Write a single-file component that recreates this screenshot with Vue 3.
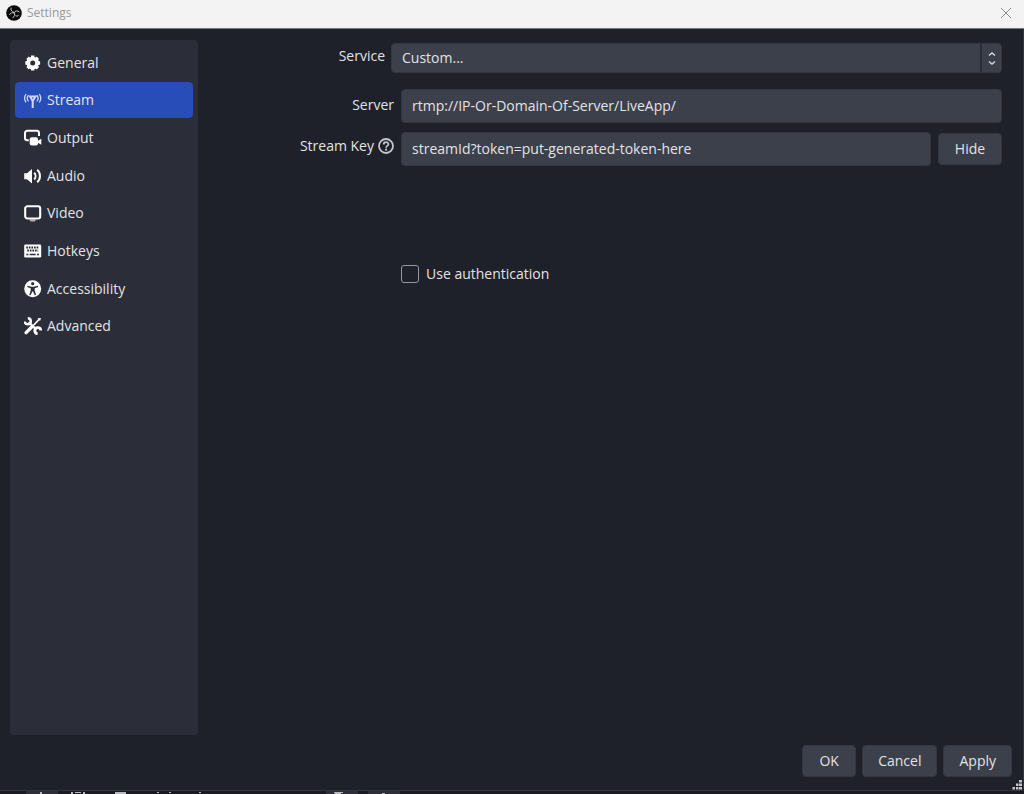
<script setup>
import { ref } from 'vue'

const sections = ['General', 'Stream', 'Output', 'Audio', 'Video', 'Hotkeys', 'Accessibility', 'Advanced']
const active = ref('Stream')
const service = ref('Custom...')
const server = ref('rtmp://IP-Or-Domain-Of-Server/LiveApp/')
const streamKey = ref('streamId?token=put-generated-token-here')
const keyShown = ref(true)
const useAuth = ref(false)
</script>

<template>
  <div class="window">
    <header class="titlebar">
      <svg class="logo" viewBox="0 0 16 16" aria-hidden="true">
        <circle cx="8" cy="8" r="7.8" fill="#0a0a0a" />
        <g fill="none" stroke="#d0d0d0" stroke-width="1" stroke-linecap="round">
          <path d="M5 3c-.4 2.300.9 4 3 4.400" />
          <path d="M8.200 7.300c1.200-1.700 3.200-2 4.900-.5" />
          <path d="M8.300 7.600c1.100 1.900.6 3.800-1.400 5" />
          <path d="M7.600 7.800c-1.500-.3-3.200.3-4 1.600" />
          <path d="M9.900 10.900c1 .4 1.900.2 2.500-.4" />
        </g>
      </svg>
      <h1 class="title">Settings</h1>
      <button class="close" type="button" aria-label="Close">
        <svg viewBox="0 0 12 12"><path d="M1 1l10 10M11 1L1 11" fill="none" stroke="#8c8c8c" /></svg>
      </button>
    </header>

    <div class="body">
      <nav class="sidebar">
        <ul class="sections">
          <li v-for="name in sections" :key="name">
            <button type="button" class="section" :class="{ active: name === active }" @click="active = name">
              <svg class="icon" viewBox="0 0 18 18" aria-hidden="true">
                <g v-if="name === 'General'">
                  <circle cx="8.700" cy="9" r="4.400" fill="none" stroke="currentColor" stroke-width="3.800" />
                  <path d="M8.700 1.600v2.500M8.700 13.900v2.500M1.300 9h2.500M13.600 9h2.500M3.500 3.800l1.800 1.800M12.100 12.400l1.800 1.800M3.500 14.200l1.800-1.800M12.100 5.600l1.800-1.800" stroke="currentColor" stroke-width="3.400" />
                </g>
                <g v-else-if="name === 'Stream'" fill="none" stroke="currentColor">
                  <path d="M1.800 3.500a7 7 0 0 0 0 7.500M4.200 4.600a4.500 4.500 0 0 0 0 5.300M15.600 3.500a7 7 0 0 1 0 7.500M13.200 4.600a4.500 4.500 0 0 1 0 5.300" stroke-width="1.300" stroke-linecap="round" />
                  <path d="M6 5.500h5.600L8.700 9.900z" stroke-width="1.900" />
                  <path d="M8.700 9v8" stroke-width="2" />
                </g>
                <g v-else-if="name === 'Output'">
                  <path d="M4.800 11.200H3.200A2.200 2.200 0 0 1 1 9V4a2.200 2.200 0 0 1 2.200-2.200h9.600A2.200 2.200 0 0 1 15 4v3" fill="none" stroke="currentColor" stroke-width="2" />
                  <rect x="5.700" y="8.200" width="8.300" height="8.200" rx="2" fill="currentColor" />
                  <path d="M13.500 12.100l3.800-2.300v6l-3.800-2.300z" fill="currentColor" />
                </g>
                <g v-else-if="name === 'Audio'">
                  <path d="M.2 6.200h2.800L8 1.900v14.600l-5-4.300H.2z" fill="currentColor" />
                  <path d="M10.200 5.600c1.800 1.900 1.800 5 0 6.900M13.200 2.800c3.700 3.200 3.700 9.300 0 12.500" fill="none" stroke="currentColor" stroke-width="2" />
                </g>
                <g v-else-if="name === 'Video'">
                  <rect x="1.200" y="2.300" width="15" height="12.200" rx="2.200" fill="none" stroke="currentColor" stroke-width="2.100" />
                  <path d="M5.200 15.500h7l-1.500 1.900h-4z" fill="currentColor" opacity=".65" />
                </g>
                <g v-else-if="name === 'Hotkeys'">
                  <rect x=".2" y="2.500" width="17" height="13" rx="1.300" fill="currentColor" />
                  <path d="M2.200 5.500h13M3.200 8.500h11" fill="none" stroke="#2b2d38" stroke-width="1.800" stroke-dasharray="1.700 .9" />
                  <path d="M2.400 12.500h2M5.700 12.500h6M13 12.500h2" fill="none" stroke="#2b2d38" stroke-width="1.500" />
                </g>
                <g v-else-if="name === 'Accessibility'">
                  <circle cx="8.700" cy="8.700" r="8.500" fill="currentColor" />
                  <circle cx="8.700" cy="3.700" r="1.600" fill="#2b2d38" />
                  <path d="M3.500 5.700l4 1.100h2.400l4-1.100.3 1.200-3.500 1.300v2.200l1.400 4.500-1.300.4-1.700-3.800h-.8l-1.700 3.800-1.300-.4 1.400-4.500V8.200L3.200 6.900z" fill="#2b2d38" />
                </g>
                <g v-else fill="none" stroke="currentColor">
                  <path d="M15.500 2L9.300 8.500" stroke-width="1.800" />
                  <path d="M17 .9l-.9 3-2.600-2.600z" fill="currentColor" stroke="none" />
                  <path d="M7.300 10.500L2.100 15.700" stroke-width="3.300" stroke-linecap="round" />
                  <path d="M4.700 5.200l7.700 7.400" stroke-width="2.200" />
                  <path d="M3.800 1.300a3 3 0 1 1-3 3.200" stroke-width="2.500" />
                  <path d="M13.600 16.700a3 3 0 1 1 3.200-3.200" stroke-width="2.800" />
                </g>
              </svg>
              <span>{{ name }}</span>
            </button>
          </li>
        </ul>
      </nav>

      <form class="form" @submit.prevent>
        <div class="row service-row">
          <label class="label" for="service">Service</label>
          <div class="combo">
            <select id="service" v-model="service" class="field">
              <option>Custom...</option>
            </select>
            <svg class="arrows" viewBox="0 0 20 28" aria-hidden="true">
              <path d="M7 11.500l3-2.500 3 2.500M7 17.500l3 2.500 3-2.500" fill="none" stroke="#d5d6d9" stroke-width="1.400" />
            </svg>
          </div>
        </div>
        <div class="row server-row">
          <label class="label" for="server">Server</label>
          <input id="server" v-model="server" class="field text" type="text" />
        </div>
        <div class="row key-row">
          <div class="label">
            <label for="key">Stream Key</label>
            <svg class="help" viewBox="0 0 16 16" aria-hidden="true">
              <circle cx="8" cy="8" r="7" fill="none" stroke="#c4c5c8" stroke-width="1.800" />
              <path d="M5.700 6.400C5.700 3.300 10.400 3.300 10.400 6.200 10.400 7.900 8.100 7.800 8.100 9.700" fill="none" stroke="#c4c5c8" stroke-width="1.700" />
              <circle cx="8.100" cy="11.700" r="1.100" fill="#c4c5c8" />
            </svg>
          </div>
          <input id="key" v-model="streamKey" class="field text" :type="keyShown ? 'text' : 'password'" />
          <button class="button hide" type="button" @click="keyShown = !keyShown">{{ keyShown ? 'Hide' : 'Show' }}</button>
        </div>
        <label class="auth">
          <input v-model="useAuth" type="checkbox" />
          <span>Use authentication</span>
        </label>
      </form>
    </div>

    <footer class="actions">
      <button class="button" type="button">OK</button>
      <button class="button" type="button">Cancel</button>
      <button class="button" type="button">Apply</button>
      <svg class="grip" viewBox="0 0 10 10" aria-hidden="true">
        <path d="M7 0h3v2.500H7zM4 3.500h2.500V6H4zM7 3.500h3V6H7zM.5 7H3v2.500H.5zM4 7h2.500v2.500H4zM7 7h3v2.500H7z" fill="#c6c6c8" />
      </svg>
    </footer>

    <div class="backdrop">
      <svg width="420" height="3" viewBox="0 0 420 3" aria-hidden="true">
        <path d="M26 0h32v3H26zM326 0h32v3h-32zM368 0h32v3h-32z" fill="#2d2e38" />
        <path d="M40 1h2v2h-2zM71 1h2v2h-2zM83 1h2v2h-2zM75 1h6v1h-6zM115 1h11v2h-11zM157 1h2v1h-2zM169 1h2v1h-2zM199 1h2v1h-2zM334 1h9v1h-9zM335 2h6v1h-6zM382 2h3v1h-3z" fill="#b9b9c0" />
      </svg>
    </div>
  </div>
</template>

<style>
body {
  margin: 0;
  background: #1f2129;
}
</style>

<style scoped>
.window {
  display: flex;
  flex-direction: column;
  min-height: 100vh;
  box-sizing: border-box;
  background: #1e2129;
  color: #e2e3e5;
  font: 14px/20px "Open Sans", "Noto Sans", sans-serif;
}
button, input, select {
  font: inherit;
  color: inherit;
}
.titlebar {
  display: flex;
  align-items: center;
  height: 29px;
  padding: 0 12px 3px 6px;
  box-sizing: border-box;
  background: #f3f3f3;
  border-bottom: 1px solid #77797d;
}
.logo {
  width: 16px;
  height: 16px;
}
.title {
  flex: 1;
  margin: 0 0 0 5px;
  font-size: 12px;
  font-weight: 400;
  line-height: 20px;
  color: #999;
}
.close {
  display: flex;
  padding: 0;
  border: 0;
  background: none;
}
.close svg {
  width: 12px;
  height: 12px;
}
.body {
  flex: 1;
  display: flex;
  padding: 11px 21px 0 10px;
  border-right: 1px solid #34363f;
}
.sidebar {
  width: 188px;
  padding: 4px 5px;
  box-sizing: border-box;
  border-radius: 4px;
  background: #2b2d38;
}
.sections {
  display: grid;
  grid-auto-rows: 1fr;
  align-items: center;
  height: 301px;
  margin: 0;
  padding: 0;
  list-style: none;
}
.section {
  display: flex;
  align-items: center;
  gap: 5px;
  width: 100%;
  height: 36px;
  padding: 0 9px;
  border: 0;
  border-radius: 4px;
  background: none;
  text-align: left;
}
.section.active {
  background: #284cb8;
}
.icon {
  width: 18px;
  height: 18px;
  color: #fdfdfd;
}
.active .icon {
  color: #cdd9f6;
}
.form {
  flex: 1;
  min-width: 0;
}
.row {
  display: flex;
}
.label {
  display: flex;
  justify-content: flex-end;
  gap: 4px;
  width: 196px;
  margin-right: 7px;
}
.service-row {
  margin-top: 3px;
}
.service-row .label {
  width: 187px;
  margin-right: 6px;
  padding-top: 3px;
}
.server-row {
  margin-top: 16px;
}
.server-row .label {
  padding-top: 6px;
}
.key-row {
  margin-top: 9px;
}
.key-row .label {
  padding-top: 4px;
}
.help {
  width: 16px;
  height: 16px;
  margin-top: 2px;
}
.field {
  flex: 1;
  min-width: 0;
  box-sizing: border-box;
  border: 1px solid #343741;
  border-radius: 4px;
  background: #3c404b;
}
.text {
  height: 34px;
  padding: 0 10px 1px;
}
.combo {
  position: relative;
  display: flex;
  flex: 1;
}
.combo .field {
  height: 30px;
  padding: 0 30px 0 10px;
  appearance: none;
}
.arrows {
  position: absolute;
  top: 1px;
  right: 0;
  width: 20px;
  height: 28px;
  border-left: 2px solid #292c35;
}
.button {
  min-width: 54px;
  height: 32px;
  padding: 0 15px;
  border: 1px solid #343741;
  border-radius: 4px;
  background: #3c404b;
}
.hide {
  min-width: 64px;
  margin: 1px 0 0 7px;
}
.auth {
  display: flex;
  align-items: center;
  gap: 7px;
  width: max-content;
  margin: 98px 0 0 203px;
}
.auth input {
  width: 18px;
  height: 18px;
  margin: 0;
  border: 1px solid #96979b;
  border-radius: 3px;
  appearance: none;
}
.auth input:checked {
  background: #284cb8;
}
.actions {
  position: relative;
  display: flex;
  justify-content: flex-end;
  gap: 6px;
  padding: 10px 11px 13px;
  border-right: 1px solid #34363f;
  border-bottom: 1px solid #34363f;
  border-bottom-right-radius: 4px;
}
.grip {
  position: absolute;
  right: 1px;
  bottom: 0;
  width: 10px;
  height: 10px;
}
.backdrop {
  height: 3px;
  background: #1b1a23;
}
.backdrop svg {
  display: block;
}
</style>
